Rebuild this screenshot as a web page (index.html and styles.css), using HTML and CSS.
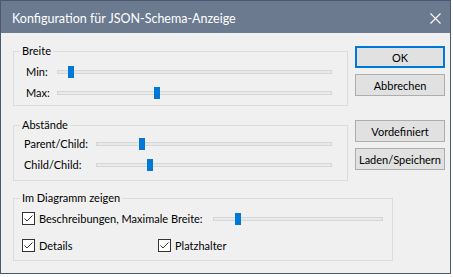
FILE: index.html
```html
<!DOCTYPE html>
<html lang="de">
<head>
<meta charset="utf-8">
<title>Konfiguration für JSON-Schema-Anzeige</title>
<link rel="stylesheet" href="styles.css">
</head>
<body>
<div class="window">
  <div class="titlebar">
    <span class="title">Konfiguration für JSON-Schema-Anzeige</span>
    <svg class="close" viewBox="0 0 11 11" width="11" height="11"><path d="M0.5 0.5L10.5 10.5M10.5 0.5L0.5 10.5" stroke="#fff" stroke-width="1.1" fill="none"/></svg>
  </div>
  <div class="content">
    <div class="top">
      <div class="groups">
        <div class="group g-breite">
          <span class="legend">Breite</span>
          <div class="row"><span class="lbl">Min:</span><div class="track"><span class="thumb" style="left:10px"></span></div></div>
          <div class="row"><span class="lbl">Max:</span><div class="track"><span class="thumb" style="left:96px"></span></div></div>
        </div>
        <div class="group g-abst">
          <span class="legend">Abstände</span>
          <div class="row"><span class="lbl">Parent/Child:</span><div class="track"><span class="thumb" style="left:42px"></span></div></div>
          <div class="row"><span class="lbl">Child/Child:</span><div class="track"><span class="thumb" style="left:50px"></span></div></div>
        </div>
      </div>
      <div class="buttons">
        <div class="btn btn-ok">OK</div>
        <div class="btn">Abbrechen</div>
        <div class="btn btn-sep">Vordefiniert</div>
        <div class="btn">Laden/Speichern</div>
      </div>
    </div>
    <div class="group g-diag">
      <span class="legend">Im Diagramm zeigen</span>
      <div class="row">
        <label class="chk chk-wide"><span class="box"><svg viewBox="0 0 11 11" width="11" height="11"><path d="M1.5 5.5L4 8L9.5 2.5" stroke="#333" stroke-width="1" fill="none"/></svg></span>Beschreibungen, Maximale Breite:</label>
        <div class="track"><span class="thumb" style="left:21px"></span></div>
      </div>
      <div class="row row-b">
        <label class="chk chk-details"><span class="box"><svg viewBox="0 0 11 11" width="11" height="11"><path d="M1.5 5.5L4 8L9.5 2.5" stroke="#333" stroke-width="1" fill="none"/></svg></span>Details</label>
        <label class="chk"><span class="box"><svg viewBox="0 0 11 11" width="11" height="11"><path d="M1.5 5.5L4 8L9.5 2.5" stroke="#333" stroke-width="1" fill="none"/></svg></span>Platzhalter</label>
      </div>
    </div>
  </div>
</div>
</body>
</html>
```
FILE: styles.css
```css
* { box-sizing: border-box; }
html, body { margin: 0; padding: 0; background: #ffffff; }
body { font-family: Lato, "Liberation Sans", sans-serif; font-size: 11px; color: #000; white-space: nowrap; }

.window {
  width: 451px;
  height: 274px;
  border: 1px solid #4a5970;
  background: #f0f0f0;
  display: flex;
  flex-direction: column;
}
.titlebar {
  height: 32px;
  flex: none;
  background: #6b7a8f;
  color: #fff;
  display: flex;
  align-items: center;
  padding-left: 11px;
}
.title { flex: 1; padding-top: 3px; font-size: 12.5px; }
.close { margin-right: 9px; margin-top: 2px; }

.content { padding: 13px 4px 0 12px; }
.top { display: flex; }
.groups { width: 335px; padding-top: 5px; }
.buttons { margin-left: 7px; width: 90px; display: flex; flex-direction: column; }
.btn {
  height: 22px;
  border: 1px solid #adadad;
  background: #e1e1e1;
  display: flex;
  align-items: center;
  justify-content: center;
}
.btn-ok { border: 2px solid #0078d7; }
.btn + .btn { margin-top: 6px; }
.buttons .btn-sep { margin-top: 24px; }

.group { position: relative; border: 1px solid #dcdcdc; }
.legend {
  position: absolute;
  top: -8px;
  left: 6px;
  padding: 0 2px;
  background: #f0f0f0;
  line-height: 14px;
}
.g-breite { height: 55px; padding: 9px 15px 0 12px; }
.g-abst { height: 56px; margin-top: 19px; padding: 7px 15px 0 10px; }
.g-diag { width: 380px; height: 63px; margin-top: 17px; padding: 9px 9px 0 8px; }

.row { display: flex; align-items: center; height: 21px; }
.row-b { margin-top: 6px; }
.lbl { flex: none; }
.g-breite .lbl { width: 31px; }
.g-abst .lbl { width: 72px; }

.track {
  flex: 1;
  position: relative;
  height: 4px;
  border: 1px solid #d6d6d6;
  background: #e7eaea;
}
.thumb {
  position: absolute;
  top: -5px;
  width: 6px;
  height: 12px;
  background: #0078d7;
}

.chk { display: flex; align-items: center; flex: none; }
.chk-wide { width: 191px; }
.chk-details { width: 136px; }
.box {
  width: 13px;
  height: 13px;
  border: 1px solid #333;
  background: #fff;
  margin-right: 4px;
  display: flex;
}
```
